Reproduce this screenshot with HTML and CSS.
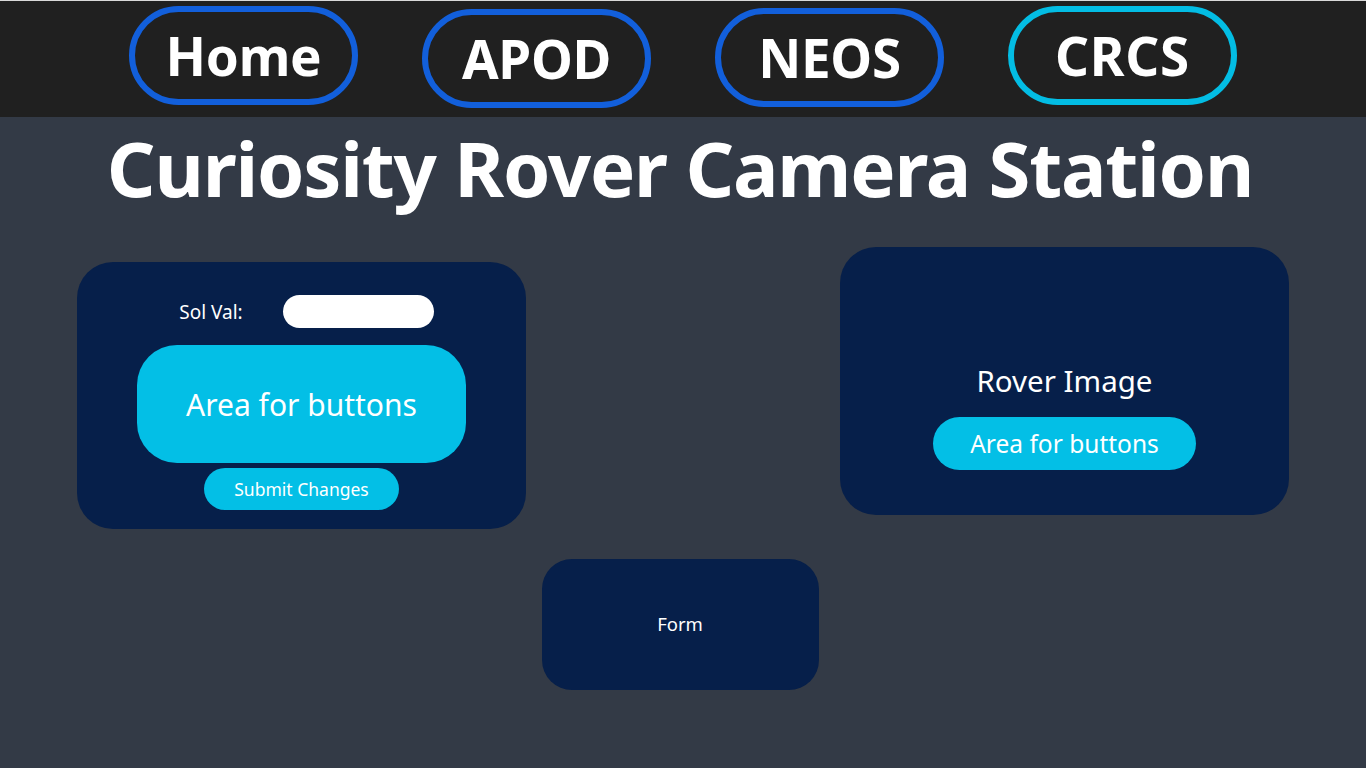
FILE: index.html
```html
<!DOCTYPE html>
<html lang="en">
<head>
<meta charset="utf-8">
<title>Curiosity Rover Camera Station</title>
<link rel="stylesheet" href="styles.css">
</head>
<body>
<header class="topbar">
  <nav class="nav">
    <a class="pill pill-home" href="#">Home</a>
    <a class="pill pill-apod" href="#">APOD</a>
    <a class="pill pill-neos" href="#">NEOS</a>
    <a class="pill pill-crcs active" href="#">CRCS</a>
  </nav>
</header>
<main class="page">
  <h1 class="title">Curiosity Rover Camera Station</h1>
  <section class="row">
    <div class="card card-controls">
      <div class="sol-row">
        <label class="sol-label" for="sol">Sol Val:</label>
        <input class="sol-input" id="sol" type="text">
      </div>
      <div class="area-big">Area for buttons</div>
      <button class="submit">Submit Changes</button>
    </div>
    <div class="card card-image">
      <div class="rover-label">Rover Image</div>
      <div class="area-small">Area for buttons</div>
    </div>
  </section>
  <section class="form-row">
    <div class="card card-form">Form</div>
  </section>
</main>
</body>
</html>
```
FILE: styles.css
```css
* { box-sizing: border-box; }
html, body { margin: 0; padding: 0; }
body {
  width: 1366px;
  height: 768px;
  overflow: hidden;
  background: #333a46;
  font-family: "Noto Sans", "Open Sans", sans-serif;
  color: #ffffff;
}
.topbar {
  background: #202020;
  border-top: 1px solid #d9d9d9;
  height: 117px;
}
.nav {
  display: flex;
  justify-content: center;
  align-items: flex-start;
  gap: 64px;
  padding-top: 5px;
}
.pill {
  display: flex;
  align-items: center;
  justify-content: center;
  width: 229px;
  height: 99px;
  border: 6px solid #125fdb;
  border-radius: 50px;
  color: #ffffff;
  text-decoration: none;
  font-weight: 700;
  font-size: 53px;
  letter-spacing: -0.3px;
}
.pill-apod { margin-top: 3px; }
.pill-neos { margin-top: 2px; }
.pill.active { border-color: #03bde4; letter-spacing: 0.8px; }
.page { display: flex; flex-direction: column; }
.title {
  margin: 6px 0 0;
  text-align: center;
  font-size: 76px;
  font-weight: 700;
  line-height: 90px;
  letter-spacing: -1.2px;
  padding-right: 6px;
}
.row {
  display: flex;
  justify-content: space-between;
  align-items: flex-start;
  padding: 0 77px;
  margin-top: 34px;
}
.card {
  background: #061f4a;
  border-radius: 36px;
}
.card-controls {
  width: 449px;
  height: 267px;
  margin-top: 15px;
  display: flex;
  flex-direction: column;
  align-items: center;
  padding-top: 33px;
}
.sol-row {
  display: flex;
  align-items: center;
  gap: 40px;
  margin-left: 10px;
}
.sol-label { font-size: 19px; }
.sol-input {
  width: 151px;
  height: 33px;
  border: none;
  border-radius: 17px;
  background: #ffffff;
}
.area-big {
  margin-top: 17px;
  width: 329px;
  height: 118px;
  border-radius: 40px;
  background: #03bfe6;
  display: flex;
  align-items: center;
  justify-content: center;
  font-size: 30px;
}
.submit {
  margin-top: 5px;
  width: 195px;
  height: 42px;
  border: none;
  border-radius: 21px;
  background: #03bfe6;
  color: #ffffff;
  font-family: inherit;
  font-size: 17.5px;
}
.card-image {
  width: 449px;
  height: 268px;
  display: flex;
  flex-direction: column;
  align-items: center;
  padding-top: 114px;
}
.rover-label { font-size: 29.5px; line-height: 40px; }
.area-small {
  margin-top: 16px;
  width: 263px;
  height: 53px;
  border-radius: 27px;
  background: #03bfe6;
  display: flex;
  align-items: center;
  justify-content: center;
  font-size: 24.5px;
}
.form-row {
  display: flex;
  justify-content: center;
  margin-top: 30px;
  padding-right: 6px;
}
.card-form {
  width: 277px;
  height: 131px;
  border-radius: 30px;
  display: flex;
  align-items: center;
  justify-content: center;
  font-size: 18.5px;
  padding-bottom: 2px;
}
```
